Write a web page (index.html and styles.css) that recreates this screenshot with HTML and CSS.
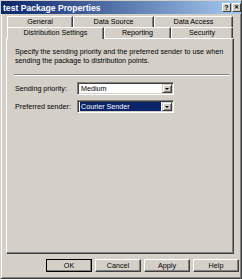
FILE: index.html
```
<!DOCTYPE html>
<html lang="en">
<head>
    <meta charset="UTF-8">
    <title>test Package Properties</title>
    <link rel="stylesheet" href="styles.css">
</head>
<body>
    <div class="window">
        <div class="titlebar">
            <span class="title">test Package Properties</span>
            <div class="caption-buttons">
                <span class="cap-btn">?</span>
                <span class="cap-btn close">&#x2715;</span>
            </div>
        </div>

        <div class="tabs">
            <div class="tab-row back">
                <div class="tab w-general">General</div>
                <div class="tab w-source">Data Source</div>
                <div class="tab w-access">Data Access</div>
            </div>
            <div class="tab-row front">
                <div class="tab active w-dist">Distribution Settings</div>
                <div class="tab w-report">Reporting</div>
                <div class="tab w-security">Security</div>
            </div>
        </div>

        <div class="panel">
            <p class="intro">Specify the sending priority and the preferred sender to use when sending the package to distribution points.</p>
            <div class="separator"></div>

            <div class="field">
                <label>Sending priority:</label>
                <div class="combo">
                    <span class="combo-value">Medium</span>
                    <span class="combo-arrow"></span>
                </div>
            </div>

            <div class="field">
                <label>Preferred sender:</label>
                <div class="combo selected">
                    <span class="combo-value">Courier Sender</span>
                    <span class="combo-arrow"></span>
                </div>
            </div>
        </div>

        <div class="buttons">
            <button class="btn default">OK</button>
            <button class="btn">Cancel</button>
            <button class="btn">Apply</button>
            <button class="btn">Help</button>
        </div>
    </div>
</body>
</html>
```

FILE: styles.css
```
body {
    margin: 0;
    background-color: #d4d0c8;
    font-family: "Liberation Sans", Arial, sans-serif;
    font-size: 7.2px;
    color: #000;
}

.window {
    width: 242px;
    height: 279px;
    box-sizing: border-box;
    border: 1px solid;
    border-color: #d4d0c8 #404040 #404040 #d4d0c8;
    box-shadow: inset 1px 1px #fff, inset -1px -1px #808080;
    background-color: #d4d0c8;
}

.titlebar {
    height: 13px;
    display: flex;
    align-items: center;
    justify-content: space-between;
    background: linear-gradient(to right, #0a246a, #a6caf0);
    padding-left: 2px;
}

.title {
    color: #fff;
    font-weight: bold;
    font-size: 8.6px;
}

.caption-buttons {
    display: flex;
    gap: 1px;
}

.cap-btn {
    width: 9px;
    height: 9px;
    box-sizing: border-box;
    background-color: #d4d0c8;
    border: 1px solid;
    border-color: #fff #404040 #404040 #fff;
    font-size: 7px;
    font-weight: bold;
    line-height: 7px;
    text-align: center;
}

.close {
    font-size: 6px;
}

.tabs {
    margin-top: 2px;
}

.tab-row {
    display: flex;
    margin-left: 6px;
    height: 11px;
}

.tab {
    box-sizing: border-box;
    border-top: 1px solid #fff;
    border-left: 1px solid #fff;
    border-right: 1px solid #404040;
    box-shadow: inset -1px 0 #808080;
    text-align: center;
    line-height: 10px;
}

.front .tab {
    position: relative;
}

.tab.active {
    background-color: #d4d0c8;
    height: 12px;
    z-index: 1;
}

.w-general { width: 66px; }
.w-source { width: 81px; }
.w-access { width: 79px; }
.w-dist { width: 97px; }
.w-report { width: 67px; }
.w-security { width: 62px; }

.panel {
    margin-left: 5px;
    width: 228px;
    height: 216px;
    box-sizing: border-box;
    border: 1px solid;
    border-color: #fff #404040 #404040 #fff;
    box-shadow: inset -1px -1px #808080;
    padding: 8px 8px 0;
}

.intro {
    margin: 0;
    line-height: 9px;
}

.separator {
    margin: 9px -4px 0 -1px;
    border-top: 1px solid #808080;
    border-bottom: 1px solid #fff;
}

.field {
    display: flex;
    align-items: center;
    margin-top: 6px;
}

.field + .field {
    margin-top: 5px;
}

.field:first-of-type {
    margin-top: 7px;
}

label {
    width: 62px;
}

.combo {
    width: 97px;
    height: 13px;
    box-sizing: border-box;
    border: 1px solid;
    border-color: #808080 #fff #fff #808080;
    box-shadow: inset 1px 1px #404040, inset -1px -1px #d4d0c8;
    background-color: #fff;
    display: flex;
    align-items: center;
    padding: 2px 1px 2px 2px;
}

.combo-value {
    flex: 1;
    padding-left: 1px;
    line-height: 9px;
}

.selected .combo-value {
    background-color: #0a246a;
    color: #fff;
    margin-right: 1px;
}

.combo-arrow {
    width: 10px;
    height: 9px;
    box-sizing: border-box;
    background-color: #d4d0c8;
    border: 1px solid;
    border-color: #d4d0c8 #404040 #404040 #d4d0c8;
    box-shadow: inset 1px 1px #fff, inset -1px -1px #808080;
    display: flex;
    align-items: center;
    justify-content: center;
}

.combo-arrow::after {
    content: "";
    border-left: 2px solid transparent;
    border-right: 2px solid transparent;
    border-top: 2px solid #000;
}

.buttons {
    display: flex;
    gap: 3px;
    margin-top: 5px;
    padding-left: 45px;
}

.btn {
    width: 46px;
    height: 13px;
    box-sizing: border-box;
    padding: 0;
    font-family: "Liberation Sans", Arial, sans-serif;
    font-size: 7.2px;
    background-color: #d4d0c8;
    border: 1px solid;
    border-color: #fff #404040 #404040 #fff;
    box-shadow: inset -1px -1px #808080;
}

.btn.default {
    outline: 1px solid #000;
    outline-offset: -1px;
}
```
